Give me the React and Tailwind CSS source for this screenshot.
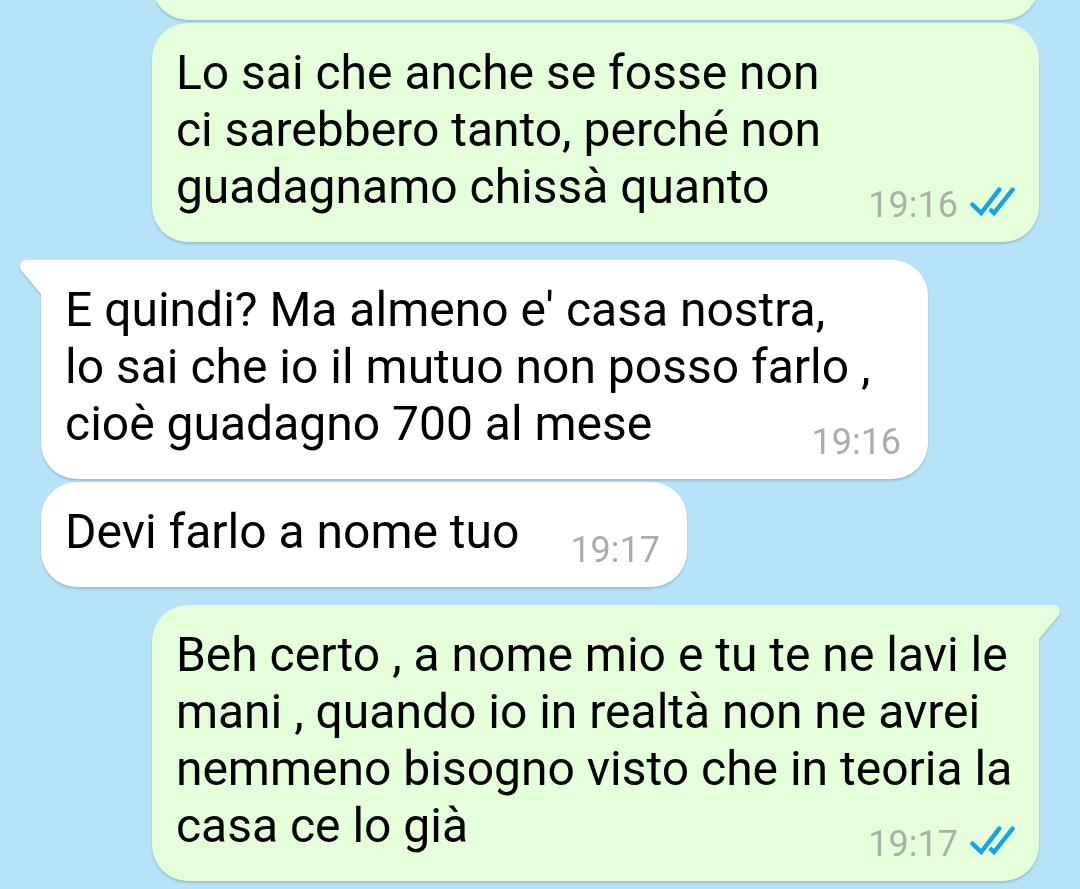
import clsx from "clsx";

const messages = [
  {
    id: 1,
    mine: true,
    time: "19:16",
    lines: ["Lo sai che anche se fosse non", "ci sarebbero tanto, perché non", "guadagnamo chissà quanto"],
  },
  {
    id: 2,
    mine: false,
    first: true,
    time: "19:16",
    lines: ["E quindi? Ma almeno e' casa nostra,", "lo sai che io il mutuo non posso farlo ,", "cioè guadagno 700 al mese"],
  },
  { id: 3, mine: false, short: true, time: "19:17", lines: ["Devi farlo a nome tuo"] },
  {
    id: 4,
    mine: true,
    first: true,
    time: "19:17",
    lines: ["Beh certo , a nome mio e tu te ne lavi le", "mani , quando io in realtà non ne avrei", "nemmeno bisogno visto che in teoria la", "casa ce lo già"],
  },
];

function Ticks() {
  return (
    <svg className="mb-[7px] h-[29px] w-[45px] shrink-0" viewBox="0 0 45 29" fill="none" stroke="#13a5e8" strokeWidth="4.4" strokeLinecap="round" aria-hidden="true">
      <path d="M2.4 17.6L11.2 26L29.2 2.6" />
      <path d="M21.2 23.4L24 26L42.6 2.6" />
    </svg>
  );
}

function Tail({ mine }) {
  return (
    <svg
      className={clsx("absolute top-0 h-[34px] w-[58px]", mine ? "-right-[21px] -scale-x-100 text-[#e6ffdb]" : "-left-[21px] text-white")}
      viewBox="0 0 58 34"
      fill="currentColor"
      aria-hidden="true"
    >
      <path d="M58 0H6C1 0 -1.5 6 1.5 10.5L21 34H58Z" />
    </svg>
  );
}

function Message({ mine, first, short, time, lines }) {
  const last = lines[lines.length - 1];
  return (
    <li
      className={clsx(
        "relative rounded-[36px] pt-[21px] pb-[19px] pl-6 drop-shadow-[0_2px_1px_rgb(0_0_0/0.16)]",
        mine ? "self-end bg-[#e6ffdb] pr-6" : "self-start bg-white pr-[27px]",
        short ? "w-fit" : "w-8/9",
        first ? "mt-[18px]" : "mt-[3px]"
      )}
    >
      {first && <Tail mine={mine} />}
      <div className="relative">
        {lines.slice(0, -1).map((line) => (
          <p key={line} className="whitespace-nowrap">{line}</p>
        ))}
        <div className="flex items-end justify-between gap-[51px]">
          <p className="pb-2">{last}</p>
          <div className="flex items-end gap-3">
            <time className={clsx("text-[36px] leading-9", mine ? "text-[#a9b1a7]" : "text-[#a9adb0]")}>{time}</time>
            {mine && <Ticks />}
          </div>
        </div>
      </div>
    </li>
  );
}

export default function App() {
  return (
    <main className="min-h-screen overflow-hidden bg-[#b7e3f8] font-[Roboto,sans-serif] text-[48px] leading-[57px] text-black">
      <ol className="flex flex-col px-[41px]">
        {/* bottom edge of the message scrolled off the top */}
        <li className="w-8/9 self-end overflow-hidden drop-shadow-[0_2px_1px_rgb(0_0_0/0.16)]">
          <div className="-mt-20 h-[100px] rounded-[36px] bg-[#e6ffdb]" />
        </li>
        {messages.map((m) => (
          <Message key={m.id} {...m} />
        ))}
      </ol>
    </main>
  );
}
